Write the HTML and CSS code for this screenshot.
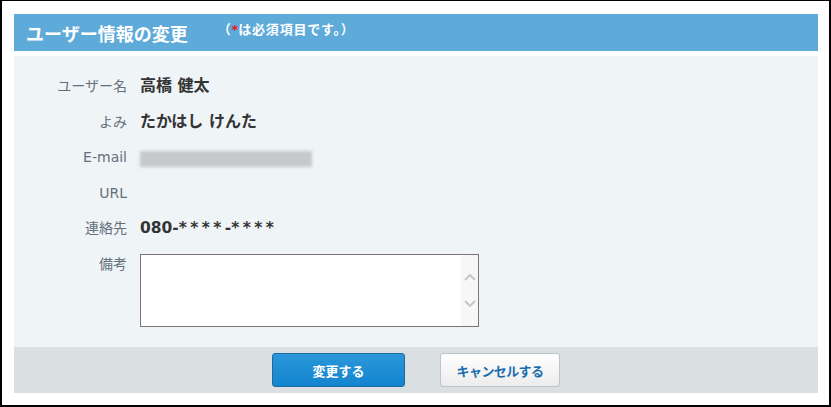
FILE: index.html
```html
<!DOCTYPE html>
<html lang="ja">
<head>
<meta charset="utf-8">
<title>ユーザー情報の変更</title>
<link rel="stylesheet" href="styles.css">
</head>
<body>
<div class="frame">
  <div class="header">
    <h1 class="title">ユーザー情報の変更</h1>
    <span class="note">（<span class="req">*</span>は必須項目です。）</span>
  </div>
  <div class="form">
    <div class="row">
      <div class="label">ユーザー名</div>
      <div class="value">高橋 健太</div>
    </div>
    <div class="row">
      <div class="label">よみ</div>
      <div class="value">たかはし けんた</div>
    </div>
    <div class="row">
      <div class="label">E-mail</div>
      <div class="value"><div class="blur"></div></div>
    </div>
    <div class="row">
      <div class="label">URL</div>
      <div class="value"></div>
    </div>
    <div class="row">
      <div class="label">連絡先</div>
      <div class="value phone">080-<span class="mask">****</span>-<span class="mask">****</span></div>
    </div>
    <div class="row">
      <div class="label">備考</div>
      <div class="value">
        <div class="textbox">
          <textarea class="textarea"></textarea>
          <div class="scrollbar">
            <svg width="12" height="8" viewBox="0 0 12 8"><path d="M1 7 L6 2 L11 7" fill="none" stroke="#c4c4c4" stroke-width="1.8"/></svg>
            <svg width="12" height="8" viewBox="0 0 12 8"><path d="M1 1 L6 6 L11 1" fill="none" stroke="#c4c4c4" stroke-width="1.8"/></svg>
          </div>
        </div>
      </div>
    </div>
  </div>
  <div class="footer">
    <button class="btn btn-primary" type="button">変更する</button>
    <button class="btn btn-cancel" type="button">キャンセルする</button>
  </div>
</div>
</body>
</html>
```
FILE: styles.css
```css
html, body {
  margin: 0;
  padding: 0;
  background: #ffffff;
}
body {
  font-family: "DejaVu Sans", "Noto Sans CJK JP", sans-serif;
}
.frame {
  width: 831px;
  height: 407px;
  box-sizing: border-box;
  border-style: solid;
  border-color: #000;
  border-width: 1px 2px 2px 2px;
  padding: 13px 11px 12px 12px;
  display: flex;
  flex-direction: column;
}
.header {
  height: 37px;
  background: #5eaad9;
  display: flex;
  align-items: center;
  padding-left: 12px;
  color: #fff;
}
.title {
  margin: 0;
  font-size: 18px;
  font-weight: bold;
  font-family: "Noto Sans CJK JP", sans-serif;
}
.note {
  margin-left: 30px;
  margin-bottom: 9px;
  font-size: 13px;
  letter-spacing: 0.8px;
  font-weight: bold;
  font-family: "Noto Sans CJK JP", sans-serif;
}
.req {
  color: #ee1122;
  font-family: "DejaVu Sans", sans-serif;
  font-size: 13px;
  font-weight: bold;
  letter-spacing: 0;
}
.form {
  margin-top: 5px;
  background: #eff4f7;
  padding: 18px 0 20px 0;
  display: flex;
  flex-direction: column;
  gap: 11.5px;
}
.row {
  display: grid;
  grid-template-columns: 113px 1fr;
  column-gap: 13px;
  min-height: 24px;
}
.label {
  text-align: right;
  font-size: 14px;
  line-height: 24px;
  color: #63707a;
}
.value {
  font-size: 16px;
  line-height: 24px;
  font-weight: bold;
  color: #333333;
  display: flex;
  align-items: center;
}
.phone {
  font-size: 15.5px;
}
.mask {
  letter-spacing: 3.4px;
}
.blur {
  width: 172px;
  height: 16px;
  margin-top: 3px;
  background: #c6c9cb;
  filter: blur(1.5px);
}
.textbox {
  margin-top: 2.5px;
  width: 339px;
  height: 73px;
  box-sizing: border-box;
  border: 1px solid #777777;
  background: #fff;
  display: flex;
}
.textarea {
  flex: 1;
  border: none;
  margin: 0;
  padding: 0;
  resize: none;
  outline: none;
  background: #fff;
}
.scrollbar {
  width: 17px;
  background: #f7f7f7;
  display: flex;
  flex-direction: column;
  align-items: center;
  justify-content: center;
  gap: 19px;
}
.scrollbar svg {
  display: block;
}
.footer {
  height: 46px;
  background: #dadfe2;
  display: flex;
  justify-content: center;
  align-items: flex-start;
  padding-top: 6px;
  box-sizing: border-box;
  gap: 35px;
}
.btn {
  height: 34px;
  border-radius: 3px;
  font-family: "Noto Sans CJK JP", sans-serif;
  font-size: 13px;
  font-weight: bold;
  padding: 0;
  cursor: pointer;
}
.btn-primary {
  width: 133px;
  color: #fff;
  border: 1px solid #1d6aa3;
  background: linear-gradient(#2b97da, #1385cf);
}
.btn-cancel {
  width: 120px;
  color: #1a6cb0;
  letter-spacing: -0.6px;
  border: 1px solid #bcc5ca;
  background: linear-gradient(#ffffff, #ececec);
}
```
